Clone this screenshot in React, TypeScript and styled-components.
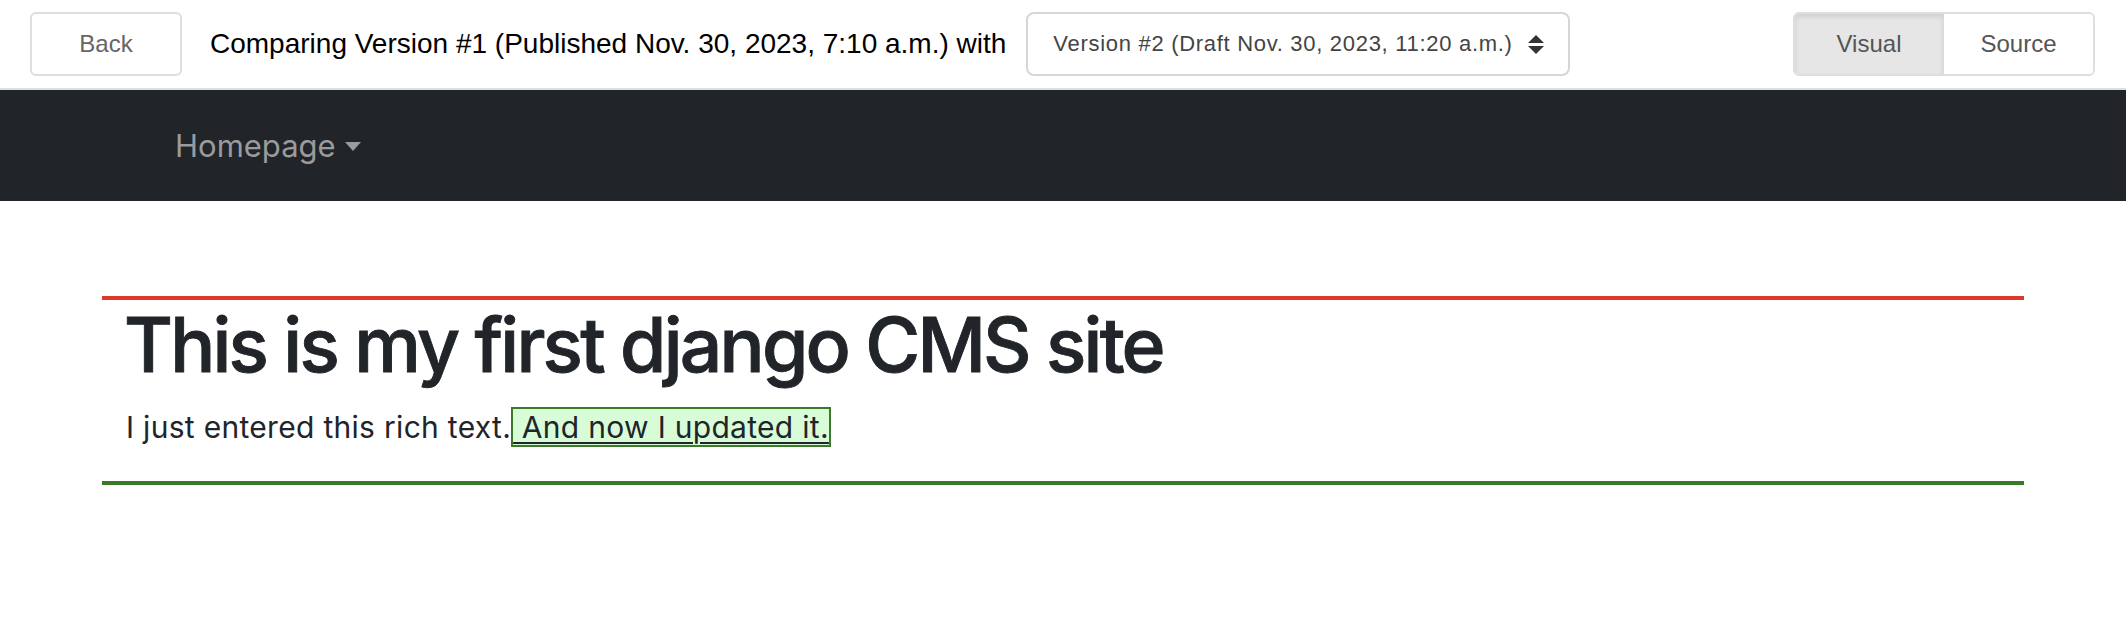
import React from "react";
import styled, { createGlobalStyle } from "styled-components";

const GlobalStyle = createGlobalStyle`
  html, body {
    margin: 0;
    padding: 0;
    background: #fff;
  }
  body {
    font-family: "Liberation Sans", Arial, sans-serif;
  }
`;

const TopBar = styled.div`
  display: flex;
  align-items: center;
  height: 88px;
  padding: 0 31px 0 30px;
  border-bottom: 2px solid #dedede;
  box-sizing: content-box;
`;

const Button = styled.button`
  height: 64px;
  width: 152px;
  border: 2px solid #dedede;
  border-radius: 6px;
  background: #fff;
  color: #666;
  font-family: "Liberation Sans", Arial, sans-serif;
  font-size: 24px;
  padding: 0;
  cursor: pointer;
`;

const Title = styled.span`
  margin: 0 20px 0 28px;
  font-size: 28px;
  color: #000;
  white-space: nowrap;
`;

const Select = styled.div`
  display: flex;
  align-items: center;
  justify-content: space-between;
  box-sizing: border-box;
  width: 544px;
  height: 64px;
  padding: 0 24px 0 25px;
  border: 2px solid #d6d6d6;
  border-radius: 8px;
  background: #fff;
  color: #444;
  font-size: 22px;
  letter-spacing: 0.7px;
  white-space: nowrap;
`;

const Spacer = styled.div`
  flex: 1;
`;

const Segmented = styled.div`
  display: flex;
  border: 2px solid #dedede;
  border-radius: 6px;
  overflow: hidden;
`;

const SegButton = styled.button<{ $active?: boolean }>`
  width: 149px;
  height: 60px;
  border: none;
  padding: 0;
  font-family: "Liberation Sans", Arial, sans-serif;
  font-size: 24px;
  color: #555;
  background: ${({ $active }) => ($active ? "#e6e6e6" : "#fff")};
  box-shadow: ${({ $active }) =>
    $active ? "inset 0 3px 5px rgba(0, 0, 0, 0.1)" : "none"};
  border-right: ${({ $active }) => ($active ? "1px solid #d8d8d8" : "none")};
  cursor: pointer;
`;

const Navbar = styled.nav`
  display: flex;
  align-items: center;
  height: 111px;
  padding-left: 175px;
  background: #212529;
`;

const NavLink = styled.a`
  display: flex;
  align-items: center;
  font-family: Inter, "Noto Sans", sans-serif;
  font-size: 31px;
  color: #999b9d;
  text-decoration: none;

  &::after {
    content: "";
    margin-left: 9px;
    margin-top: 2px;
    border-top: 9px solid #999b9d;
    border-left: 8.5px solid transparent;
    border-right: 8.5px solid transparent;
  }
`;

const Main = styled.main`
  padding: 95px 102px 0;
`;

const DiffBlock = styled.div`
  padding: 0 24px 0 22px;
  border-top: 4px solid #de3a2a;
  border-bottom: 4px solid #377a28;
  color: #212529;
  font-family: Inter, "Noto Sans", sans-serif;
`;

const Heading = styled.h1`
  margin: 0 0 16px;
  font-size: 75px;
  line-height: 1.19;
  font-weight: 500;
  letter-spacing: -2.8px;
  -webkit-text-stroke: 0.9px #212529;
`;

const Paragraph = styled.p`
  margin: 0 0 31px 2px;
  font-size: 30px;
  line-height: 1.5;
  letter-spacing: 0.3px;
`;

const Inserted = styled.ins`
  background: #d8fcd8;
  border: 2px solid #3b7a2a;
  text-decoration: underline;
  text-decoration-thickness: 2px;
  text-underline-offset: 4px;
`;

const SortArrows = () => (
  <svg width="16" height="19" viewBox="0 0 16 19" aria-hidden="true">
    <polygon points="0,8 8,0 16,8" fill="#333" />
    <polygon points="0,11 16,11 8,19" fill="#333" />
  </svg>
);

export default function App() {
  return (
    <>
      <GlobalStyle />
      <TopBar>
        <Button>Back</Button>
        <Title>Comparing Version #1 (Published Nov. 30, 2023, 7:10 a.m.) with</Title>
        <Select>
          <span>Version #2 (Draft Nov. 30, 2023, 11:20 a.m.)</span>
          <SortArrows />
        </Select>
        <Spacer />
        <Segmented>
          <SegButton $active>Visual</SegButton>
          <SegButton>Source</SegButton>
        </Segmented>
      </TopBar>
      <Navbar>
        <NavLink href="#">Homepage</NavLink>
      </Navbar>
      <Main>
        <DiffBlock>
          <Heading>This is my first django CMS site</Heading>
          <Paragraph>
            I just entered this rich text.
            <Inserted> And now I updated it.</Inserted>
          </Paragraph>
        </DiffBlock>
      </Main>
    </>
  );
}
